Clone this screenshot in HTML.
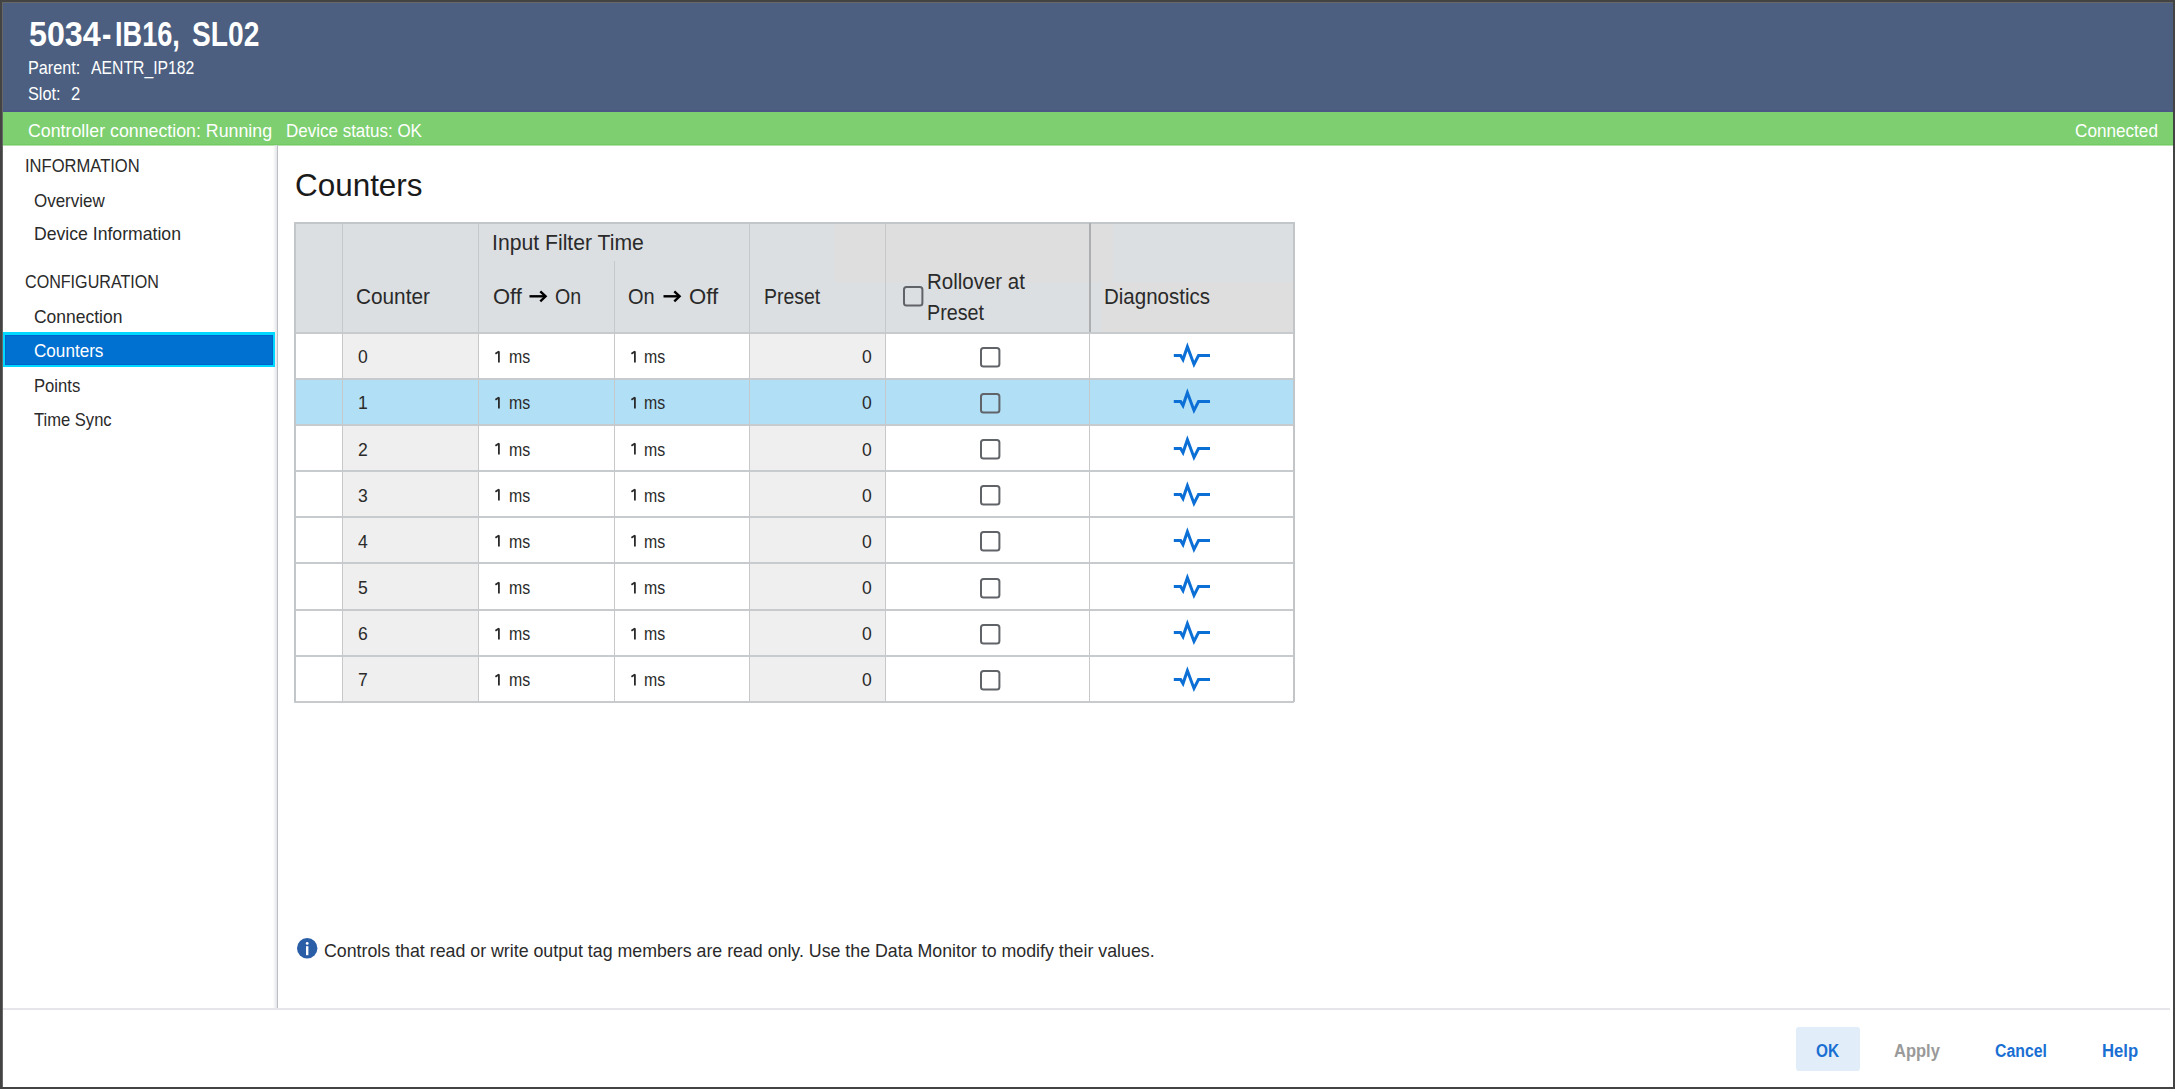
<!DOCTYPE html>
<html><head><meta charset="utf-8"><style>
html,body{margin:0;padding:0;width:2175px;height:1089px;overflow:hidden;background:#ffffff;}
body{position:relative;font-family:"Liberation Sans",sans-serif;}
.t{position:absolute;white-space:pre;line-height:1;transform-origin:0 0;}
</style></head><body>
<div style="position:absolute;left:0;top:0;width:2175px;height:1089px;background:#434343"></div>
<div style="position:absolute;left:3px;top:3px;width:2170px;height:1084px;background:#ffffff"></div>
<div style="position:absolute;left:2px;top:2px;width:2171px;height:1px;background:#676767"></div>
<div style="position:absolute;left:2px;top:2px;width:1px;height:1085px;background:#676767"></div>
<div style="position:absolute;left:3px;top:3px;width:2170px;height:108px;background:#4c5f80"></div>
<div style="position:absolute;left:3px;top:110px;width:2170px;height:2px;background:#4b5886"></div><div style="position:absolute;left:3px;top:112px;width:2170px;height:33px;background:#7dcf6f"></div><div style="position:absolute;left:3px;top:144px;width:2170px;height:1px;background:#72ca63"></div><div style="position:absolute;left:3px;top:145px;width:2170px;height:1px;background:#b3e3aa"></div>
<div style="position:absolute;left:273px;top:145px;width:4px;height:863px;background:linear-gradient(to right,rgba(230,232,238,0),#e2e4e9)"></div><div style="position:absolute;left:276.5px;top:145px;width:1.5px;height:863px;background:#bcc0c4"></div>
<div style="position:absolute;left:3px;top:1008px;width:2167px;height:2px;background:#e6e6ea"></div>
<div style="position:absolute;left:3px;top:332px;width:272px;height:35px;background:#00d8ff"></div>
<div style="position:absolute;left:5px;top:335px;width:268px;height:29.5px;background:#0070d1;box-shadow:inset 0 0 0 1px #0063cc"></div>
<div style="position:absolute;left:1796px;top:1027px;width:64px;height:44px;background:#e1edf9;border-radius:3px"></div>
<svg style="position:absolute;left:296px;top:937px" width="22" height="22" viewBox="0 0 22 22"><circle cx="11.2" cy="11.3" r="10.2" fill="#2a5ea6"/><rect x="10" y="9.2" width="2.4" height="9" fill="#fff"/><circle cx="11.2" cy="6.4" r="1.4" fill="#fff"/></svg>
<div style="position:absolute;left:294px;top:222px;width:1000px;height:111px;background:#dcdfe2;"></div><div style="position:absolute;left:835px;top:223px;width:278px;height:59px;background:#dedede;"></div><div style="position:absolute;left:1102px;top:282px;width:191px;height:50px;background:#dedede;"></div><div style="position:absolute;left:295px;top:333px;width:998px;height:46px;background:#ffffff;"></div><div style="position:absolute;left:343px;top:333px;width:135px;height:46px;background:#efefef;"></div><div style="position:absolute;left:750px;top:333px;width:135px;height:46px;background:#efefef;"></div><div style="position:absolute;left:295px;top:379px;width:998px;height:46px;background:#b1dff6;"></div><div style="position:absolute;left:295px;top:425px;width:998px;height:46px;background:#ffffff;"></div><div style="position:absolute;left:343px;top:425px;width:135px;height:46px;background:#efefef;"></div><div style="position:absolute;left:750px;top:425px;width:135px;height:46px;background:#efefef;"></div><div style="position:absolute;left:295px;top:471px;width:998px;height:46px;background:#ffffff;"></div><div style="position:absolute;left:343px;top:471px;width:135px;height:46px;background:#efefef;"></div><div style="position:absolute;left:750px;top:471px;width:135px;height:46px;background:#efefef;"></div><div style="position:absolute;left:295px;top:517px;width:998px;height:46px;background:#ffffff;"></div><div style="position:absolute;left:343px;top:517px;width:135px;height:46px;background:#efefef;"></div><div style="position:absolute;left:750px;top:517px;width:135px;height:46px;background:#efefef;"></div><div style="position:absolute;left:295px;top:563px;width:998px;height:46px;background:#ffffff;"></div><div style="position:absolute;left:343px;top:563px;width:135px;height:46px;background:#efefef;"></div><div style="position:absolute;left:750px;top:563px;width:135px;height:46px;background:#efefef;"></div><div style="position:absolute;left:295px;top:610px;width:998px;height:46px;background:#ffffff;"></div><div style="position:absolute;left:343px;top:610px;width:135px;height:46px;background:#efefef;"></div><div style="position:absolute;left:750px;top:610px;width:135px;height:46px;background:#efefef;"></div><div style="position:absolute;left:295px;top:656px;width:998px;height:46px;background:#ffffff;"></div><div style="position:absolute;left:343px;top:656px;width:135px;height:46px;background:#efefef;"></div><div style="position:absolute;left:750px;top:656px;width:135px;height:46px;background:#efefef;"></div><div style="position:absolute;left:294px;top:332px;width:1000px;height:2px;background:#c8cbce;"></div><div style="position:absolute;left:294px;top:378px;width:1000px;height:2px;background:#c8cbce;"></div><div style="position:absolute;left:294px;top:424px;width:1000px;height:2px;background:#c8cbce;"></div><div style="position:absolute;left:294px;top:470px;width:1000px;height:2px;background:#c8cbce;"></div><div style="position:absolute;left:294px;top:516px;width:1000px;height:2px;background:#c8cbce;"></div><div style="position:absolute;left:294px;top:562px;width:1000px;height:2px;background:#c8cbce;"></div><div style="position:absolute;left:294px;top:609px;width:1000px;height:2px;background:#c8cbce;"></div><div style="position:absolute;left:294px;top:655px;width:1000px;height:2px;background:#c8cbce;"></div><div style="position:absolute;left:294px;top:701px;width:1000px;height:2px;background:#c8cbce;"></div><div style="position:absolute;left:294px;top:222px;width:2px;height:480px;background:#c3c6c9;"></div><div style="position:absolute;left:342px;top:222px;width:1px;height:480px;background:#c6c8ca;"></div><div style="position:absolute;left:478px;top:222px;width:1px;height:480px;background:#c6c8ca;"></div><div style="position:absolute;left:614px;top:261px;width:1px;height:441px;background:#c6c8ca;"></div><div style="position:absolute;left:749px;top:222px;width:1px;height:480px;background:#c6c8ca;"></div><div style="position:absolute;left:885px;top:222px;width:1px;height:480px;background:#c6c8ca;"></div><div style="position:absolute;left:1089px;top:222px;width:1px;height:480px;background:#c6c8ca;"></div><div style="position:absolute;left:1293px;top:222px;width:2px;height:480px;background:#c3c6c9;"></div><div style="position:absolute;left:294px;top:222px;width:1000px;height:1.5px;background:#c3c6c9;"></div><div style="position:absolute;left:1089px;top:223px;width:1.6px;height:109px;background:#acaeb0;"></div>
<svg style="position:absolute;left:902.5px;top:285.5px" width="21" height="21"><rect x="1" y="1" width="18.4" height="18.6" rx="2.5" fill="none" stroke="#606368" stroke-width="2"/></svg><svg style="position:absolute;left:528.1px;top:288px" width="22" height="16" viewBox="0 0 22 16"><path d="M1.5 8.3H17.5" stroke="#000" stroke-width="2.4"/><path d="M12.3 3.3L17.6 8.3L12.3 13.3" fill="none" stroke="#000" stroke-width="2.4" stroke-linejoin="miter"/></svg><svg style="position:absolute;left:662.4px;top:288px" width="22" height="16" viewBox="0 0 22 16"><path d="M1.5 8.3H17.5" stroke="#000" stroke-width="2.4"/><path d="M12.3 3.3L17.6 8.3L12.3 13.3" fill="none" stroke="#000" stroke-width="2.4" stroke-linejoin="miter"/></svg><svg style="position:absolute;left:980px;top:347.0px" width="21" height="21"><rect x="1" y="1" width="18.4" height="18.6" rx="2.5" fill="none" stroke="#606368" stroke-width="2"/></svg><svg style="position:absolute;left:1170px;top:341.2px" width="44" height="32" viewBox="0 0 44 32"><polyline points="3.8,14.6 10.6,14.6 13,18.6 17.4,5.7 24,23.4 28.5,14.6 40,14.6" fill="none" stroke="#0b6fd6" stroke-width="3" stroke-linejoin="miter" stroke-miterlimit="10"/></svg><svg style="position:absolute;left:980px;top:393.1px" width="21" height="21"><rect x="1" y="1" width="18.4" height="18.6" rx="2.5" fill="none" stroke="#606368" stroke-width="2"/></svg><svg style="position:absolute;left:1170px;top:387.4px" width="44" height="32" viewBox="0 0 44 32"><polyline points="3.8,14.6 10.6,14.6 13,18.6 17.4,5.7 24,23.4 28.5,14.6 40,14.6" fill="none" stroke="#0b6fd6" stroke-width="3" stroke-linejoin="miter" stroke-miterlimit="10"/></svg><svg style="position:absolute;left:980px;top:439.2px" width="21" height="21"><rect x="1" y="1" width="18.4" height="18.6" rx="2.5" fill="none" stroke="#606368" stroke-width="2"/></svg><svg style="position:absolute;left:1170px;top:433.6px" width="44" height="32" viewBox="0 0 44 32"><polyline points="3.8,14.6 10.6,14.6 13,18.6 17.4,5.7 24,23.4 28.5,14.6 40,14.6" fill="none" stroke="#0b6fd6" stroke-width="3" stroke-linejoin="miter" stroke-miterlimit="10"/></svg><svg style="position:absolute;left:980px;top:485.3px" width="21" height="21"><rect x="1" y="1" width="18.4" height="18.6" rx="2.5" fill="none" stroke="#606368" stroke-width="2"/></svg><svg style="position:absolute;left:1170px;top:479.7px" width="44" height="32" viewBox="0 0 44 32"><polyline points="3.8,14.6 10.6,14.6 13,18.6 17.4,5.7 24,23.4 28.5,14.6 40,14.6" fill="none" stroke="#0b6fd6" stroke-width="3" stroke-linejoin="miter" stroke-miterlimit="10"/></svg><svg style="position:absolute;left:980px;top:531.4000000000001px" width="21" height="21"><rect x="1" y="1" width="18.4" height="18.6" rx="2.5" fill="none" stroke="#606368" stroke-width="2"/></svg><svg style="position:absolute;left:1170px;top:525.9px" width="44" height="32" viewBox="0 0 44 32"><polyline points="3.8,14.6 10.6,14.6 13,18.6 17.4,5.7 24,23.4 28.5,14.6 40,14.6" fill="none" stroke="#0b6fd6" stroke-width="3" stroke-linejoin="miter" stroke-miterlimit="10"/></svg><svg style="position:absolute;left:980px;top:577.5px" width="21" height="21"><rect x="1" y="1" width="18.4" height="18.6" rx="2.5" fill="none" stroke="#606368" stroke-width="2"/></svg><svg style="position:absolute;left:1170px;top:572.1px" width="44" height="32" viewBox="0 0 44 32"><polyline points="3.8,14.6 10.6,14.6 13,18.6 17.4,5.7 24,23.4 28.5,14.6 40,14.6" fill="none" stroke="#0b6fd6" stroke-width="3" stroke-linejoin="miter" stroke-miterlimit="10"/></svg><svg style="position:absolute;left:980px;top:623.6000000000001px" width="21" height="21"><rect x="1" y="1" width="18.4" height="18.6" rx="2.5" fill="none" stroke="#606368" stroke-width="2"/></svg><svg style="position:absolute;left:1170px;top:618.3px" width="44" height="32" viewBox="0 0 44 32"><polyline points="3.8,14.6 10.6,14.6 13,18.6 17.4,5.7 24,23.4 28.5,14.6 40,14.6" fill="none" stroke="#0b6fd6" stroke-width="3" stroke-linejoin="miter" stroke-miterlimit="10"/></svg><svg style="position:absolute;left:980px;top:669.7px" width="21" height="21"><rect x="1" y="1" width="18.4" height="18.6" rx="2.5" fill="none" stroke="#606368" stroke-width="2"/></svg><svg style="position:absolute;left:1170px;top:664.5px" width="44" height="32" viewBox="0 0 44 32"><polyline points="3.8,14.6 10.6,14.6 13,18.6 17.4,5.7 24,23.4 28.5,14.6 40,14.6" fill="none" stroke="#0b6fd6" stroke-width="3" stroke-linejoin="miter" stroke-miterlimit="10"/></svg>
<div class="t" style="left:28.80px;top:17.07px;font-size:34.16px;color:#ffffff;font-weight:bold;transform:scaleX(0.9434)">5034</div><div class="t" style="left:102.40px;top:17.07px;font-size:34.16px;color:#ffffff;font-weight:bold;transform:scaleX(0.8215)">-</div><div class="t" style="left:115.40px;top:17.07px;font-size:34.16px;color:#ffffff;font-weight:bold;transform:scaleX(0.7950)">IB16,</div><div class="t" style="left:192.40px;top:17.07px;font-size:34.16px;color:#ffffff;font-weight:bold;transform:scaleX(0.8244)">SL02</div><div class="t" style="left:28.10px;top:58.63px;font-size:18.02px;color:#ffffff;transform:scaleX(0.8998)">Parent:</div><div class="t" style="left:90.70px;top:58.63px;font-size:18.02px;color:#ffffff;transform:scaleX(0.8745)">AENTR_IP182</div><div class="t" style="left:27.70px;top:84.73px;font-size:18.02px;color:#ffffff;transform:scaleX(0.9044)">Slot:</div><div class="t" style="left:71.10px;top:84.73px;font-size:18.02px;color:#ffffff;transform:scaleX(0.9197)">2</div><div class="t" style="left:27.70px;top:123.46px;font-size:17.88px;color:#ffffff;transform:scaleX(0.9953)">Controller connection: Running</div><div class="t" style="left:286.40px;top:123.46px;font-size:17.88px;color:#ffffff;transform:scaleX(0.9510)">Device status: OK</div><div class="t" style="left:2075.00px;top:123.36px;font-size:17.88px;color:#ffffff;transform:scaleX(0.9602)">Connected</div><div class="t" style="left:25.30px;top:157.29px;font-size:18.31px;color:#2a2a2a;transform:scaleX(0.9052)">INFORMATION</div><div class="t" style="left:34.00px;top:191.81px;font-size:18.17px;color:#2a2a2a;transform:scaleX(0.9345)">Overview</div><div class="t" style="left:34.00px;top:225.11px;font-size:18.17px;color:#2a2a2a;transform:scaleX(0.9707)">Device Information</div><div class="t" style="left:24.90px;top:273.41px;font-size:18.17px;color:#2a2a2a;transform:scaleX(0.8870)">CONFIGURATION</div><div class="t" style="left:34.00px;top:308.11px;font-size:18.17px;color:#2a2a2a;transform:scaleX(0.9627)">Connection</div><div class="t" style="left:34.00px;top:341.51px;font-size:18.17px;color:#ffffff;transform:scaleX(0.9422)">Counters</div><div class="t" style="left:34.00px;top:376.61px;font-size:18.17px;color:#2a2a2a;transform:scaleX(0.9167)">Points</div><div class="t" style="left:34.00px;top:410.91px;font-size:18.17px;color:#2a2a2a;transform:scaleX(0.9128)">Time Sync</div><div class="t" style="left:294.70px;top:169.76px;font-size:31.69px;color:#1a1a1a;transform:scaleX(0.9919)">Counters</div><div class="t" style="left:492.40px;top:231.47px;font-size:22.82px;color:#2a2a2a;transform:scaleX(0.9284)">Input Filter Time</div><div class="t" style="left:356.30px;top:284.79px;font-size:22.67px;color:#2a2a2a;transform:scaleX(0.9167)">Counter</div><div class="t" style="left:492.80px;top:284.79px;font-size:22.67px;color:#2a2a2a;transform:scaleX(0.9689)">Off</div><div class="t" style="left:554.90px;top:284.79px;font-size:22.67px;color:#2a2a2a;transform:scaleX(0.8655)">On</div><div class="t" style="left:628.40px;top:284.79px;font-size:22.67px;color:#2a2a2a;transform:scaleX(0.8821)">On</div><div class="t" style="left:688.90px;top:284.79px;font-size:22.67px;color:#2a2a2a;transform:scaleX(0.9756)">Off</div><div class="t" style="left:763.60px;top:284.79px;font-size:22.67px;color:#2a2a2a;transform:scaleX(0.8576)">Preset</div><div class="t" style="left:926.50px;top:269.59px;font-size:22.67px;color:#2a2a2a;transform:scaleX(0.9042)">Rollover at</div><div class="t" style="left:926.50px;top:300.79px;font-size:22.67px;color:#2a2a2a;transform:scaleX(0.8698)">Preset</div><div class="t" style="left:1104.20px;top:284.79px;font-size:22.67px;color:#2a2a2a;transform:scaleX(0.9051)">Diagnostics</div><div class="t" style="left:357.50px;top:348.34px;font-size:18.60px;color:#2a2a2a;transform:scaleX(0.9447)">0</div><div class="t" style="left:508.60px;top:349.33px;font-size:17.44px;color:#2a2a2a;transform:scaleX(0.9105)">ms</div><div class="t" style="left:644.40px;top:349.33px;font-size:17.44px;color:#2a2a2a;transform:scaleX(0.9105)">ms</div><svg style="position:absolute;left:490.0px;top:345.00px" width="14" height="22"><path d="M5.4 8.8L8.9 6.5V17.6" fill="none" stroke="#2a2a2a" stroke-width="1.8" stroke-linejoin="bevel"/></svg><svg style="position:absolute;left:625.8px;top:345.00px" width="14" height="22"><path d="M5.4 8.8L8.9 6.5V17.6" fill="none" stroke="#2a2a2a" stroke-width="1.8" stroke-linejoin="bevel"/></svg><div class="t" style="left:861.75px;top:348.34px;font-size:18.60px;color:#2a2a2a;transform:scaleX(0.9447)">0</div><div class="t" style="left:357.50px;top:394.44px;font-size:18.60px;color:#2a2a2a;transform:scaleX(0.9447)">1</div><div class="t" style="left:508.60px;top:395.43px;font-size:17.44px;color:#2a2a2a;transform:scaleX(0.9105)">ms</div><div class="t" style="left:644.40px;top:395.43px;font-size:17.44px;color:#2a2a2a;transform:scaleX(0.9105)">ms</div><svg style="position:absolute;left:490.0px;top:391.10px" width="14" height="22"><path d="M5.4 8.8L8.9 6.5V17.6" fill="none" stroke="#2a2a2a" stroke-width="1.8" stroke-linejoin="bevel"/></svg><svg style="position:absolute;left:625.8px;top:391.10px" width="14" height="22"><path d="M5.4 8.8L8.9 6.5V17.6" fill="none" stroke="#2a2a2a" stroke-width="1.8" stroke-linejoin="bevel"/></svg><div class="t" style="left:861.75px;top:394.44px;font-size:18.60px;color:#2a2a2a;transform:scaleX(0.9447)">0</div><div class="t" style="left:357.50px;top:440.54px;font-size:18.60px;color:#2a2a2a;transform:scaleX(0.9447)">2</div><div class="t" style="left:508.60px;top:441.53px;font-size:17.44px;color:#2a2a2a;transform:scaleX(0.9105)">ms</div><div class="t" style="left:644.40px;top:441.53px;font-size:17.44px;color:#2a2a2a;transform:scaleX(0.9105)">ms</div><svg style="position:absolute;left:490.0px;top:437.20px" width="14" height="22"><path d="M5.4 8.8L8.9 6.5V17.6" fill="none" stroke="#2a2a2a" stroke-width="1.8" stroke-linejoin="bevel"/></svg><svg style="position:absolute;left:625.8px;top:437.20px" width="14" height="22"><path d="M5.4 8.8L8.9 6.5V17.6" fill="none" stroke="#2a2a2a" stroke-width="1.8" stroke-linejoin="bevel"/></svg><div class="t" style="left:861.75px;top:440.54px;font-size:18.60px;color:#2a2a2a;transform:scaleX(0.9447)">0</div><div class="t" style="left:357.50px;top:486.64px;font-size:18.60px;color:#2a2a2a;transform:scaleX(0.9447)">3</div><div class="t" style="left:508.60px;top:487.63px;font-size:17.44px;color:#2a2a2a;transform:scaleX(0.9105)">ms</div><div class="t" style="left:644.40px;top:487.63px;font-size:17.44px;color:#2a2a2a;transform:scaleX(0.9105)">ms</div><svg style="position:absolute;left:490.0px;top:483.30px" width="14" height="22"><path d="M5.4 8.8L8.9 6.5V17.6" fill="none" stroke="#2a2a2a" stroke-width="1.8" stroke-linejoin="bevel"/></svg><svg style="position:absolute;left:625.8px;top:483.30px" width="14" height="22"><path d="M5.4 8.8L8.9 6.5V17.6" fill="none" stroke="#2a2a2a" stroke-width="1.8" stroke-linejoin="bevel"/></svg><div class="t" style="left:861.75px;top:486.64px;font-size:18.60px;color:#2a2a2a;transform:scaleX(0.9447)">0</div><div class="t" style="left:357.50px;top:532.74px;font-size:18.60px;color:#2a2a2a;transform:scaleX(0.9447)">4</div><div class="t" style="left:508.60px;top:533.73px;font-size:17.44px;color:#2a2a2a;transform:scaleX(0.9105)">ms</div><div class="t" style="left:644.40px;top:533.73px;font-size:17.44px;color:#2a2a2a;transform:scaleX(0.9105)">ms</div><svg style="position:absolute;left:490.0px;top:529.40px" width="14" height="22"><path d="M5.4 8.8L8.9 6.5V17.6" fill="none" stroke="#2a2a2a" stroke-width="1.8" stroke-linejoin="bevel"/></svg><svg style="position:absolute;left:625.8px;top:529.40px" width="14" height="22"><path d="M5.4 8.8L8.9 6.5V17.6" fill="none" stroke="#2a2a2a" stroke-width="1.8" stroke-linejoin="bevel"/></svg><div class="t" style="left:861.75px;top:532.74px;font-size:18.60px;color:#2a2a2a;transform:scaleX(0.9447)">0</div><div class="t" style="left:357.50px;top:578.84px;font-size:18.60px;color:#2a2a2a;transform:scaleX(0.9447)">5</div><div class="t" style="left:508.60px;top:579.83px;font-size:17.44px;color:#2a2a2a;transform:scaleX(0.9105)">ms</div><div class="t" style="left:644.40px;top:579.83px;font-size:17.44px;color:#2a2a2a;transform:scaleX(0.9105)">ms</div><svg style="position:absolute;left:490.0px;top:575.50px" width="14" height="22"><path d="M5.4 8.8L8.9 6.5V17.6" fill="none" stroke="#2a2a2a" stroke-width="1.8" stroke-linejoin="bevel"/></svg><svg style="position:absolute;left:625.8px;top:575.50px" width="14" height="22"><path d="M5.4 8.8L8.9 6.5V17.6" fill="none" stroke="#2a2a2a" stroke-width="1.8" stroke-linejoin="bevel"/></svg><div class="t" style="left:861.75px;top:578.84px;font-size:18.60px;color:#2a2a2a;transform:scaleX(0.9447)">0</div><div class="t" style="left:357.50px;top:624.94px;font-size:18.60px;color:#2a2a2a;transform:scaleX(0.9447)">6</div><div class="t" style="left:508.60px;top:625.93px;font-size:17.44px;color:#2a2a2a;transform:scaleX(0.9105)">ms</div><div class="t" style="left:644.40px;top:625.93px;font-size:17.44px;color:#2a2a2a;transform:scaleX(0.9105)">ms</div><svg style="position:absolute;left:490.0px;top:621.60px" width="14" height="22"><path d="M5.4 8.8L8.9 6.5V17.6" fill="none" stroke="#2a2a2a" stroke-width="1.8" stroke-linejoin="bevel"/></svg><svg style="position:absolute;left:625.8px;top:621.60px" width="14" height="22"><path d="M5.4 8.8L8.9 6.5V17.6" fill="none" stroke="#2a2a2a" stroke-width="1.8" stroke-linejoin="bevel"/></svg><div class="t" style="left:861.75px;top:624.94px;font-size:18.60px;color:#2a2a2a;transform:scaleX(0.9447)">0</div><div class="t" style="left:357.50px;top:671.04px;font-size:18.60px;color:#2a2a2a;transform:scaleX(0.9447)">7</div><div class="t" style="left:508.60px;top:672.03px;font-size:17.44px;color:#2a2a2a;transform:scaleX(0.9105)">ms</div><div class="t" style="left:644.40px;top:672.03px;font-size:17.44px;color:#2a2a2a;transform:scaleX(0.9105)">ms</div><svg style="position:absolute;left:490.0px;top:667.70px" width="14" height="22"><path d="M5.4 8.8L8.9 6.5V17.6" fill="none" stroke="#2a2a2a" stroke-width="1.8" stroke-linejoin="bevel"/></svg><svg style="position:absolute;left:625.8px;top:667.70px" width="14" height="22"><path d="M5.4 8.8L8.9 6.5V17.6" fill="none" stroke="#2a2a2a" stroke-width="1.8" stroke-linejoin="bevel"/></svg><div class="t" style="left:861.75px;top:671.04px;font-size:18.60px;color:#2a2a2a;transform:scaleX(0.9447)">0</div><div class="t" style="left:324.40px;top:941.61px;font-size:18.17px;color:#2a2a2a;transform:scaleX(0.9791)">Controls that read or write output tag members are read only. Use the Data Monitor to modify their values.</div><div class="t" style="left:1816.40px;top:1041.56px;font-size:18.46px;color:#1a6fd3;font-weight:bold;transform:scaleX(0.8343)">OK</div><div class="t" style="left:1894.20px;top:1041.56px;font-size:18.46px;color:#9a9a9a;font-weight:bold;transform:scaleX(0.8944)">Apply</div><div class="t" style="left:1994.60px;top:1041.56px;font-size:18.46px;color:#1a6fd3;font-weight:bold;transform:scaleX(0.8588)">Cancel</div><div class="t" style="left:2101.70px;top:1041.56px;font-size:18.46px;color:#1a6fd3;font-weight:bold;transform:scaleX(0.9033)">Help</div>
</body></html>
